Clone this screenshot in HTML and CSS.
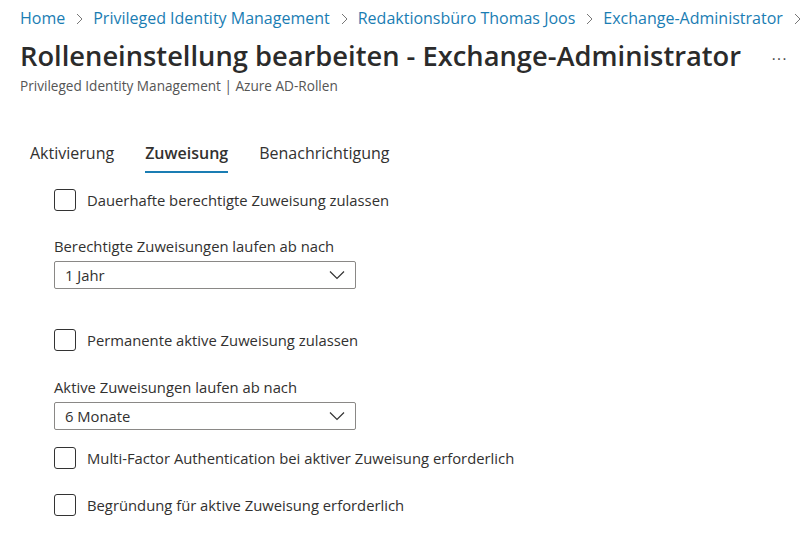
FILE: index.html
```html
<!DOCTYPE html>
<html lang="de">

<head>
    <meta charset="UTF-8" />
    <meta name="viewport" content="width=device-width, initial-scale=1.0" />
    <title>Rolleneinstellung bearbeiten</title>
    <link rel="stylesheet" href="styles.css">
</head>

<body>
    <nav class="breadcrumb">
        <a href="#">Home</a>
        <svg class="sep" width="7" height="12" viewBox="0 0 7 12"><path d="M1 1 L6 6 L1 11" fill="none" stroke="#777" stroke-width="1"/></svg>
        <a href="#">Privileged Identity Management</a>
        <svg class="sep" width="7" height="12" viewBox="0 0 7 12"><path d="M1 1 L6 6 L1 11" fill="none" stroke="#777" stroke-width="1"/></svg>
        <a href="#">Redaktionsbüro Thomas Joos</a>
        <svg class="sep" width="7" height="12" viewBox="0 0 7 12"><path d="M1 1 L6 6 L1 11" fill="none" stroke="#777" stroke-width="1"/></svg>
        <a href="#">Exchange-Administrator</a>
        <svg class="sep" width="7" height="12" viewBox="0 0 7 12"><path d="M1 1 L6 6 L1 11" fill="none" stroke="#777" stroke-width="1"/></svg>
    </nav>

    <div class="header">
        <h1>Rolleneinstellung bearbeiten - Exchange-Administrator</h1>
        <span class="more">···</span>
    </div>
    <div class="subtitle">Privileged Identity Management | Azure AD-Rollen</div>

    <!-- Tabs -->
    <div class="tabs">
        <div class="tab">Aktivierung</div>
        <div class="tab active">Zuweisung</div>
        <div class="tab">Benachrichtigung</div>
    </div>

    <div class="settings">
        <label class="check"><span class="box"></span> Dauerhafte berechtigte Zuweisung zulassen</label>

        <div class="field">
            <div class="field-label">Berechtigte Zuweisungen laufen ab nach</div>
            <div class="dropdown">
                <span>1 Jahr</span>
                <svg width="16" height="10" viewBox="0 0 16 10"><path d="M1 1.5 L8 8.5 L15 1.5" fill="none" stroke="#333" stroke-width="1.2"/></svg>
            </div>
        </div>

        <label class="check gap-top"><span class="box"></span> Permanente aktive Zuweisung zulassen</label>

        <div class="field">
            <div class="field-label">Aktive Zuweisungen laufen ab nach</div>
            <div class="dropdown">
                <span>6 Monate</span>
                <svg width="16" height="10" viewBox="0 0 16 10"><path d="M1 1.5 L8 8.5 L15 1.5" fill="none" stroke="#333" stroke-width="1.2"/></svg>
            </div>
        </div>

        <label class="check tight"><span class="box"></span> Multi-Factor Authentication bei aktiver Zuweisung erforderlich</label>
        <label class="check"><span class="box"></span> Begründung für aktive Zuweisung erforderlich</label>
    </div>
</body>

</html>
```

FILE: styles.css
```css
body {
    font-family: "Open Sans", Arial, sans-serif;
    background: #fff;
    margin: 0;
    padding: 0 20px;
    color: #323130;
}

.breadcrumb {
    height: 36px;
    display: flex;
    align-items: center;
    font-size: 16px;
    white-space: nowrap;
}

.breadcrumb a {
    color: #1a7db3;
    text-decoration: none;
    flex-shrink: 0;
}

.breadcrumb .sep {
    flex-shrink: 0;
    margin: 1px 10px 0 11px;
}

.header {
    display: flex;
    align-items: center;
    justify-content: space-between;
    height: 38px;
}

.header h1 {
    margin: 0;
    font-size: 27.3px;
    font-weight: 600;
    color: #2b2b2b;
    white-space: nowrap;
}

.more {
    color: #444;
    font-size: 15px;
    letter-spacing: 1.5px;
    margin-right: -8px;
    margin-top: 5px;
}

.subtitle {
    font-size: 13.6px;
    color: #555;
    margin-top: 2px;
    line-height: 20px;
}

.tabs {
    display: flex;
    gap: 31px;
    margin-top: 46px;
    padding-left: 10px;
}

.tab {
    font-size: 16px;
    line-height: 22px;
    padding-bottom: 7px;
    border-bottom: 2px solid transparent;
}

.tab.active {
    font-weight: 600;
    border-bottom-color: #1a7db3;
}

.settings {
    padding-left: 34px;
    margin-top: 16px;
    font-size: 14.8px;
}

.check {
    display: flex;
    align-items: center;
    gap: 11px;
    height: 22px;
    margin-bottom: 25px;
}

.box {
    box-sizing: border-box;
    width: 22px;
    height: 22px;
    border: 1.3px solid #333;
    border-radius: 3px;
}

.gap-top {
    margin-top: 40px;
    margin-bottom: 26px;
}

.tight {
    margin-top: 17px;
}

.field-label {
    line-height: 20px;
    margin-bottom: 5px;
}

.dropdown {
    box-sizing: border-box;
    width: 302px;
    height: 28px;
    border: 1px solid #8a8886;
    border-radius: 2px;
    display: flex;
    align-items: center;
    justify-content: space-between;
    padding: 0 10px;
}
```
